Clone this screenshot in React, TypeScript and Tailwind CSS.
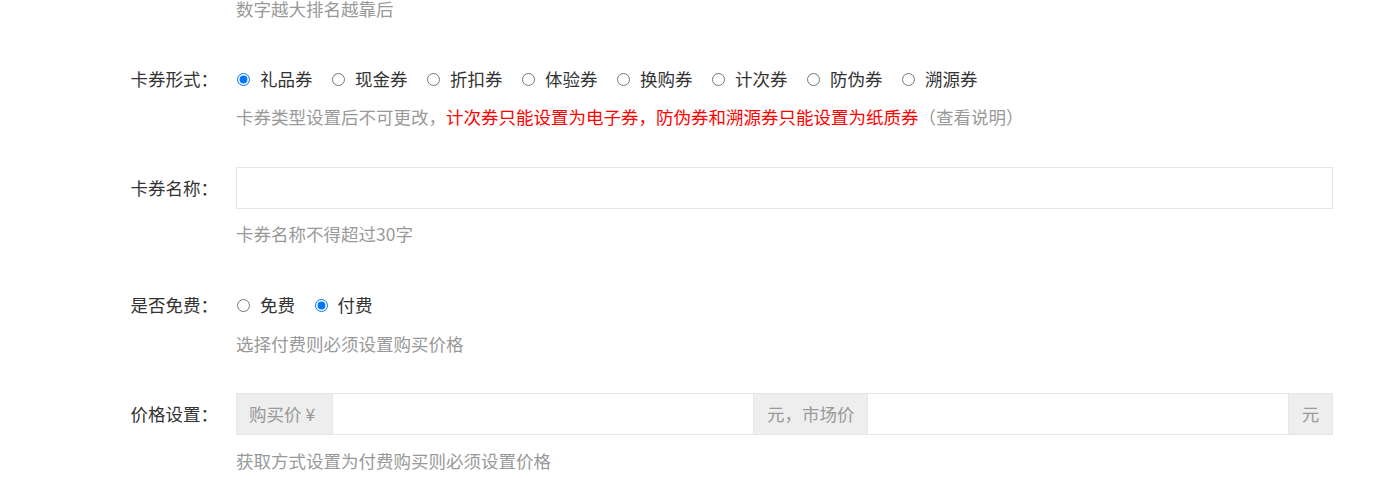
import React, { useState } from 'react';

const cardTypes = ['礼品券', '现金券', '折扣券', '体验券', '换购券', '计次券', '防伪券', '溯源券'];

const Help = ({ children, className = '' }: { children: React.ReactNode; className?: string }) => (
  <p className={`text-[17.5px] leading-[24px] text-[#999] whitespace-nowrap ${className}`}>{children}</p>
);

const Label = ({ children }: { children: React.ReactNode }) => (
  <label className="w-[218px] shrink-0 text-right text-[17.5px] text-[#333] leading-[42px] whitespace-nowrap">
    {children}
  </label>
);

const Radio = ({
  name,
  label,
  checked,
  onChange,
}: {
  name: string;
  label: string;
  checked: boolean;
  onChange: () => void;
}) => (
  <label className="flex items-center mr-[19.5px] cursor-pointer">
    <input
      type="radio"
      name={name}
      checked={checked}
      onChange={onChange}
      className="w-[13px] h-[13px] m-0 mr-[10px]"
    />
    <span className="text-[17.5px] text-[#333]">{label}</span>
  </label>
);

export default function App() {
  const [cardType, setCardType] = useState('礼品券');
  const [free, setFree] = useState(false);

  return (
    <div
      className="w-[1395px] h-[494px] overflow-hidden bg-white"
      style={{ fontFamily: '"Microsoft YaHei", "Noto Sans CJK SC", sans-serif' }}
    >
      <div className="pl-[236px] -mt-[3px]">
        <Help>数字越大排名越靠后</Help>
      </div>

      {/* 卡券形式 */}
      <div className="flex mt-[37px]">
        <Label>卡券形式：</Label>
        <div className="ml-[18px]">
          <div className="flex items-center h-[42px] pl-[1px]">
            {cardTypes.map((t) => (
              <Radio key={t} name="type" label={t} checked={cardType === t} onChange={() => setCardType(t)} />
            ))}
          </div>
          <Help className="mt-[5px]">
            卡券类型设置后不可更改，
            <span className="text-[#ff0000]">计次券只能设置为电子券，防伪券和溯源券只能设置为纸质券</span>
            （查看说明）
          </Help>
        </div>
      </div>

      {/* 卡券名称 */}
      <div className="flex mt-[38px]">
        <Label>卡券名称：</Label>
        <div className="ml-[18px] w-[1097px]">
          <input
            type="text"
            className="block w-full h-[42px] border border-[#e6e6e6] px-3 text-[17.5px] outline-none"
          />
          <Help className="mt-[13px]">卡券名称不得超过30字</Help>
        </div>
      </div>

      {/* 是否免费 */}
      <div className="flex mt-[38px]">
        <Label>是否免费：</Label>
        <div className="ml-[18px]">
          <div className="flex items-center h-[42px] pl-[1px]">
            <Radio name="free" label="免费" checked={free} onChange={() => setFree(true)} />
            <Radio name="free" label="付费" checked={!free} onChange={() => setFree(false)} />
          </div>
          <Help className="mt-[6px]">选择付费则必须设置购买价格</Help>
        </div>
      </div>

      {/* 价格设置 */}
      <div className="flex mt-[37px]">
        <Label>价格设置：</Label>
        <div className="ml-[18px] w-[1097px]">
          <div className="flex h-[42px] border border-[#e6e6e6]">
            <span className="w-[95px] shrink-0 flex items-center pl-[12px] bg-[#eee] text-[#999] text-[17.5px] whitespace-nowrap">
              购买价 ¥
            </span>
            <input type="text" className="flex-1 min-w-0 px-3 text-[17.5px] outline-none border-l border-[#e6e6e6]" />
            <span className="w-[115px] shrink-0 flex items-center pl-[13px] bg-[#eee] text-[#999] text-[17.5px] border-x border-[#e6e6e6] whitespace-nowrap">
              元，市场价
            </span>
            <input type="text" className="flex-1 min-w-0 px-3 text-[17.5px] outline-none" />
            <span className="w-[44px] shrink-0 flex items-center justify-center bg-[#eee] text-[#999] text-[17.5px] border-l border-[#e6e6e6]">
              元
            </span>
          </div>
          <Help className="mt-[14px]">获取方式设置为付费购买则必须设置价格</Help>
        </div>
      </div>
    </div>
  );
}
